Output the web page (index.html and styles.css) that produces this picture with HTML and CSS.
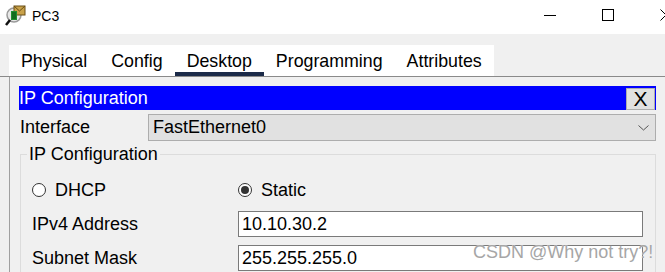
FILE: index.html
```html
<!DOCTYPE html>
<html lang="en">
<head>
  <meta charset="UTF-8" />
  <title>PC3</title>
  <link rel="stylesheet" href="styles.css">
</head>
<body>
  <div class="window">
    <div class="titlebar">
      <svg class="app-icon" width="22" height="24" viewBox="0 0 22 24">
        <circle cx="9" cy="11" r="7" fill="#e8e8e8" stroke="#9a9a9a" stroke-width="1.5"/>
        <line x1="5" y1="16" x2="1" y2="21" stroke="#111" stroke-width="2.5"/>
        <rect x="9" y="2" width="11" height="9" fill="#c9a24a" stroke="#6b4f16"/>
        <path d="M9 2 L14.5 7 L20 2" fill="none" stroke="#6b4f16"/>
        <rect x="6" y="7" width="6" height="9" fill="#1f8f2f"/>
        <line x1="8" y1="8" x2="8" y2="15" stroke="#0a4a12"/>
        <line x1="10" y1="8" x2="10" y2="15" stroke="#0a4a12"/>
      </svg>
      <span class="title">PC3</span>
      <div class="controls">
        <svg width="12" height="12" viewBox="0 0 12 12"><line x1="0" y1="6.5" x2="12" y2="6.5" stroke="#000"/></svg>
        <svg width="12" height="12" viewBox="0 0 12 12"><rect x="0.5" y="0.5" width="11" height="11" fill="none" stroke="#000"/></svg>
        <svg width="12" height="12" viewBox="0 0 12 12"><path d="M0.5 0.5 L11.5 11.5 M11.5 0.5 L0.5 11.5" stroke="#000"/></svg>
      </div>
    </div>

    <div class="tabbar">
      <div class="tabs">
        <span class="tab">Physical</span>
        <span class="tab">Config</span>
        <span class="tab active">Desktop</span>
        <span class="tab">Programming</span>
        <span class="tab">Attributes</span>
      </div>
    </div>

    <div class="panel">
      <div class="panel-head">
        <span>IP Configuration</span>
        <button class="close-btn">X</button>
      </div>

      <div class="iface-row">
        <span class="iface-label">Interface</span>
        <div class="select">
          <span>FastEthernet0</span>
          <svg width="11" height="6" viewBox="0 0 11 6"><path d="M0.5 0.5 L5.5 5 L10.5 0.5" fill="none" stroke="#555"/></svg>
        </div>
      </div>

      <fieldset class="ipconf">
        <legend>IP Configuration</legend>
        <div class="ipgrid">
          <label class="radio"><span class="dot"></span>DHCP</label>
          <label class="radio"><span class="dot on"></span>Static</label>
          <span class="field-label">IPv4 Address</span>
          <div class="field">10.10.30.2</div>
          <span class="field-label">Subnet Mask</span>
          <div class="field">255.255.255.0</div>
        </div>
      </fieldset>
    </div>

    <div class="watermark">CSDN @Why not try?!</div>
  </div>
</body>
</html>
```

FILE: styles.css
```css
body {
  margin: 0;
  font-family: 'Liberation Sans', Arial, sans-serif;
  color: #000;
  background: #f0f0f0;
}

.window {
  position: relative;
  width: 665px;
  height: 272px;
  overflow: hidden;
  background: #f0f0f0;
}

/* title bar */
.titlebar {
  height: 34px;
  background: #fff;
  display: flex;
  align-items: center;
}

.app-icon {
  margin-left: 5px;
  margin-top: -2px;
}

.title {
  font-size: 14px;
  margin-left: 5px;
  margin-top: -3px;
}

.controls {
  margin-left: auto;
  display: flex;
  gap: 46px;
  margin-right: -7px;
  margin-top: -5px;
}

.controls svg {
  display: block;
}

/* tabs */
.tabbar {
  padding: 11px 0 0 9px;
  border-bottom: 1px solid #8a8a8a;
}

.tabs {
  display: flex;
  width: fit-content;
  background: #fff;
}

.tab {
  height: 31px;
  box-sizing: border-box;
  padding: 6px 12px 0 12px;
  font-size: 17.8px;
  line-height: 21px;
  border-bottom: 4px solid transparent;
}

.tab.active {
  border-bottom-color: #1b2a48;
}

/* panel */
.panel {
  margin-left: 9px;
  border-left: 1px solid #a0a0a0;
  padding: 9px 0 0 9px;
  width: 637px;
  height: 200px;
}

.panel-head {
  height: 24px;
  background: #0000ff;
  color: #fff;
  font-size: 18px;
  display: flex;
  align-items: center;
  justify-content: space-between;
  padding-right: 1px;
}

.close-btn {
  width: 29px;
  height: 22px;
  margin-top: 1px;
  border: 1px solid #adadad;
  background: #e1e1e1;
  font-family: 'Liberation Sans', Arial, sans-serif;
  font-size: 21px;
  line-height: 18px;
  padding: 0;
  color: #000;
}

.iface-row {
  display: flex;
  align-items: center;
  margin-top: 4px;
  height: 27px;
}

.iface-label {
  width: 128px;
  font-size: 18px;
  padding-left: 1px;
}

.select {
  width: 508px;
  height: 27px;
  box-sizing: border-box;
  background: #e1e1e1;
  border: 1px solid #adadad;
  display: flex;
  align-items: center;
  justify-content: space-between;
  padding: 0 6px 0 4px;
  font-size: 18px;
}

/* ip configuration group */
.ipconf {
  margin: 3px 0 0 1px;
  border: 1px solid #dcdcdc;
  padding: 13px 0 10px 11px;
}

.ipconf legend {
  font-size: 18px;
  line-height: 20px;
  padding: 0 2px;
  margin-left: -5px;
}

.ipgrid {
  display: grid;
  grid-template-columns: 206px 405px;
  grid-auto-rows: 26px;
  row-gap: 8px;
  font-size: 18px;
}

.radio {
  display: flex;
  align-items: center;
  gap: 9px;
}

.dot {
  width: 14px;
  height: 14px;
  box-sizing: border-box;
  border: 1px solid #333;
  border-radius: 50%;
  background: #fff;
  display: flex;
  align-items: center;
  justify-content: center;
}

.dot.on::after {
  content: '';
  width: 8px;
  height: 8px;
  border-radius: 50%;
  background: #333;
}

.field-label {
  display: flex;
  align-items: center;
}

.field {
  box-sizing: border-box;
  height: 26px;
  background: #fff;
  border: 1px solid #7a7a7a;
  padding-left: 3px;
  display: flex;
  align-items: center;
}

/* overlay watermark */
.watermark {
  position: absolute;
  left: 473px;
  top: 242px;
  font-size: 18px;
  line-height: 20px;
  color: #a6a6a6;
  text-shadow: 0 0 1px #fff;
}
```
